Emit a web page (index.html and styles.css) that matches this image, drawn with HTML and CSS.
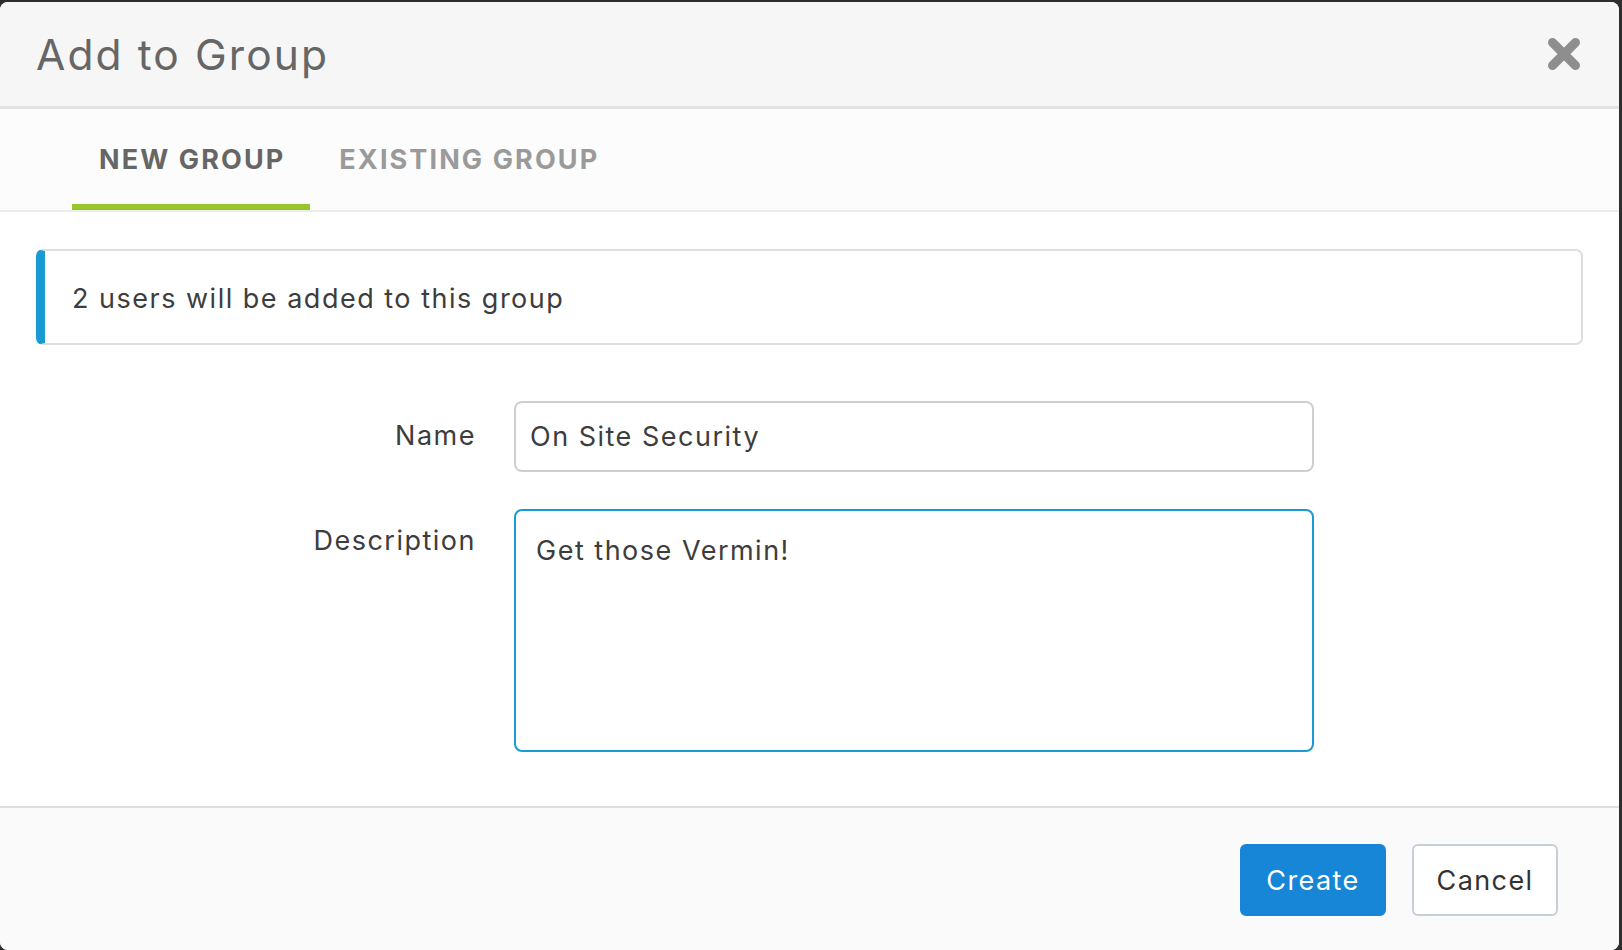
FILE: index.html
```html
<!DOCTYPE html>
<html lang="en">
<head>
<meta charset="utf-8">
<title>Add to Group</title>
<link rel="stylesheet" href="styles.css">
</head>
<body>
<div class="modal">
  <header class="modal-header">
    <h1 class="modal-title">Add to Group</h1>
    <button class="close" aria-label="Close">
      <svg width="34" height="34" viewBox="0 0 34 34"><path d="M5.5 5.5 L28.5 28.5 M28.5 5.5 L5.5 28.5" stroke="#8e8e8e" stroke-width="9" stroke-linecap="round" fill="none"/></svg>
    </button>
  </header>
  <nav class="tabs">
    <a class="tab active">NEW GROUP</a>
    <a class="tab">EXISTING GROUP</a>
  </nav>
  <main class="modal-body">
    <div class="alert">2 users will be added to this group</div>
    <div class="form-row">
      <label class="form-label">Name</label>
      <div class="input">On Site Security</div>
    </div>
    <div class="form-row">
      <label class="form-label desc">Description</label>
      <div class="textarea">Get those Vermin!</div>
    </div>
  </main>
  <footer class="modal-footer">
    <button class="btn btn-primary">Create</button>
    <button class="btn btn-default">Cancel</button>
  </footer>
</div>
</body>
</html>
```
FILE: styles.css
```css
* { box-sizing: border-box; }
html, body { margin: 0; padding: 0; }
body {
  background: #2e2e2e;
  font-family: "Inter", "Lato", sans-serif;
  color: #3a3a3a;
  height: 950px;
  overflow: hidden;
}
.modal {
  margin-top: 2px;
  width: 1619px;
  height: 948px;
  background: #fff;
  border-radius: 8px;
  overflow: hidden;
  display: flex;
  flex-direction: column;
}
.modal-header {
  height: 107px;
  background: #f6f6f6;
  border-bottom: 3px solid #e2e2e2;
  display: flex;
  align-items: center;
  justify-content: space-between;
  padding: 0 38px 0 36px;
}
.modal-title {
  margin: 0;
  font-size: 42.5px;
  font-weight: 400;
  color: #666;
  letter-spacing: 2.1px;
}
.close {
  border: 0;
  background: none;
  padding: 0;
  width: 34px;
  height: 34px;
  display: flex;
}
.tabs {
  height: 103px;
  background: #fcfcfc;
  border-bottom: 2px solid #ececec;
  display: flex;
  padding-left: 72px;
  gap: 2px;
}
.tab {
  display: flex;
  align-items: center;
  padding: 6px 25px 0 27px;
  font-size: 27px;
  font-weight: 700;
  color: #9a9a9a;
  letter-spacing: 2.1px;
  border-bottom: 6px solid transparent;
}
.tab.active {
  color: #666;
  border-bottom-color: #98c62a;
}
.modal-body {
  flex: 1;
  padding: 37px 36px 0 36px;
  border-bottom: 2px solid #dedede;
}
.alert {
  height: 96px;
  border: 2px solid #dedede;
  border-left: 9px solid #1a9ad2;
  border-radius: 7px;
  display: flex;
  align-items: center;
  padding: 2px 0 0 27px;
  font-size: 27px;
  letter-spacing: 1.5px;
  color: #3d3d3d;
}
.form-row {
  display: flex;
  gap: 38px;
}
.alert + .form-row { margin-top: 56px; }
.form-row + .form-row { margin-top: 37px; }
.form-label {
  width: 440px;
  text-align: right;
  font-size: 27px;
  letter-spacing: 1.5px;
  color: #3d3d3d;
  padding-top: 18px;
}
.form-label.desc { padding-top: 15px; }
.input {
  width: 800px;
  height: 71px;
  border: 2px solid #cfcfcf;
  border-radius: 8px;
  padding: 0 14px;
  display: flex;
  align-items: center;
  font-size: 27px;
  letter-spacing: 1.5px;
  color: #3d3d3d;
}
.textarea {
  width: 800px;
  height: 243px;
  border: 2px solid #1a9ad2;
  border-radius: 8px;
  padding: 23px 20px;
  font-size: 27px;
  letter-spacing: 1.5px;
  color: #3d3d3d;
}
.modal-footer {
  height: 142px;
  background: #fafafa;
  display: flex;
  justify-content: flex-end;
  align-items: flex-start;
  padding: 36px 61px 0 0;
  gap: 26px;
}
.btn {
  width: 146px;
  height: 72px;
  border-radius: 6px;
  font-family: inherit;
  font-size: 27px;
  letter-spacing: 1.4px;
  padding: 0;
}
.btn-primary {
  background: #1886d6;
  border: 2px solid #1886d6;
  color: #fff;
}
.btn-default {
  background: #fff;
  border: 2px solid #c8ced8;
  color: #333;
}
```
